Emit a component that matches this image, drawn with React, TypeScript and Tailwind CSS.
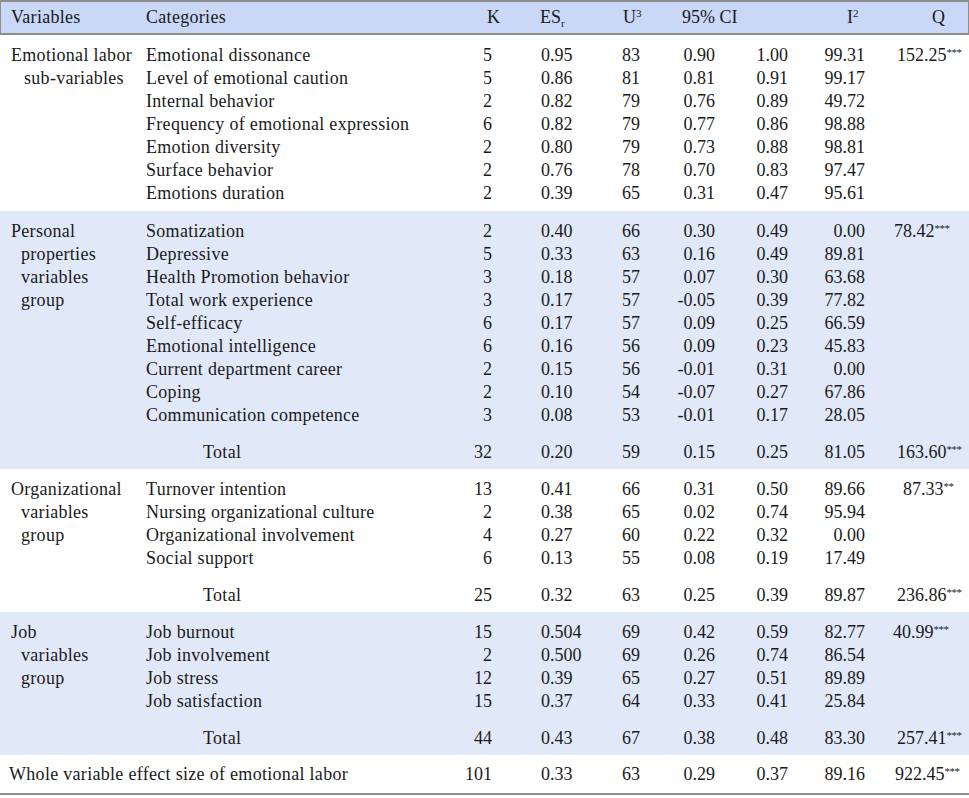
import React from "react";

type Row = {
  cat: string;
  k: string;
  es: string;
  u: string;
  lo: string;
  hi: string;
  i2: string;
  q?: string;
  stars?: string;
  qClass?: string;
};

type Section = {
  label: string[];
  labelClass?: string[];
  bg: string;
  rows: Row[];
  total?: Row;
};

const sections: Section[] = [
  {
    label: ["Emotional labor", "sub-variables"],
    labelClass: ["pl-[11px]", "pl-[24px]"],
    bg: "bg-white",
    rows: [
      { cat: "Emotional dissonance", k: "5", es: "0.95", u: "83", lo: "0.90", hi: "1.00", i2: "99.31", q: "152.25", stars: "***" },
      { cat: "Level of emotional caution", k: "5", es: "0.86", u: "81", lo: "0.81", hi: "0.91", i2: "99.17" },
      { cat: "Internal behavior", k: "2", es: "0.82", u: "79", lo: "0.76", hi: "0.89", i2: "49.72" },
      { cat: "Frequency of emotional expression", k: "6", es: "0.82", u: "79", lo: "0.77", hi: "0.86", i2: "98.88" },
      { cat: "Emotion diversity", k: "2", es: "0.80", u: "79", lo: "0.73", hi: "0.88", i2: "98.81" },
      { cat: "Surface behavior", k: "2", es: "0.76", u: "78", lo: "0.70", hi: "0.83", i2: "97.47" },
      { cat: "Emotions duration", k: "2", es: "0.39", u: "65", lo: "0.31", hi: "0.47", i2: "95.61" },
    ],
  },
  {
    label: ["Personal", "properties", "variables", "group"],
    labelClass: ["pl-[11px]", "pl-[21px]", "pl-[21px]", "pl-[21px]"],
    bg: "bg-[#e1e9f9]",
    rows: [
      { cat: "Somatization", k: "2", es: "0.40", u: "66", lo: "0.30", hi: "0.49", i2: "0.00", q: "78.42", stars: "***", qClass: "pl-[28px]" },
      { cat: "Depressive", k: "5", es: "0.33", u: "63", lo: "0.16", hi: "0.49", i2: "89.81" },
      { cat: "Health Promotion behavior", k: "3", es: "0.18", u: "57", lo: "0.07", hi: "0.30", i2: "63.68" },
      { cat: "Total work experience", k: "3", es: "0.17", u: "57", lo: "-0.05", hi: "0.39", i2: "77.82" },
      { cat: "Self-efficacy", k: "6", es: "0.17", u: "57", lo: "0.09", hi: "0.25", i2: "66.59" },
      { cat: "Emotional intelligence", k: "6", es: "0.16", u: "56", lo: "0.09", hi: "0.23", i2: "45.83" },
      { cat: "Current department career", k: "2", es: "0.15", u: "56", lo: "-0.01", hi: "0.31", i2: "0.00" },
      { cat: "Coping", k: "2", es: "0.10", u: "54", lo: "-0.07", hi: "0.27", i2: "67.86" },
      { cat: "Communication competence", k: "3", es: "0.08", u: "53", lo: "-0.01", hi: "0.17", i2: "28.05" },
    ],
    total: { cat: "Total", k: "32", es: "0.20", u: "59", lo: "0.15", hi: "0.25", i2: "81.05", q: "163.60", stars: "***" },
  },
  {
    label: ["Organizational", "variables", "group"],
    labelClass: ["pl-[11px]", "pl-[21px]", "pl-[21px]"],
    bg: "bg-white",
    rows: [
      { cat: "Turnover intention", k: "13", es: "0.41", u: "66", lo: "0.31", hi: "0.50", i2: "89.66", q: "87.33", stars: "**", qClass: "pl-[37px]" },
      { cat: "Nursing organizational culture", k: "2", es: "0.38", u: "65", lo: "0.02", hi: "0.74", i2: "95.94" },
      { cat: "Organizational involvement", k: "4", es: "0.27", u: "60", lo: "0.22", hi: "0.32", i2: "0.00" },
      { cat: "Social support", k: "6", es: "0.13", u: "55", lo: "0.08", hi: "0.19", i2: "17.49" },
    ],
    total: { cat: "Total", k: "25", es: "0.32", u: "63", lo: "0.25", hi: "0.39", i2: "89.87", q: "236.86", stars: "***" },
  },
  {
    label: ["Job", "variables", "group"],
    labelClass: ["pl-[11px]", "pl-[21px]", "pl-[21px]"],
    bg: "bg-[#e1e9f9]",
    rows: [
      { cat: "Job burnout", k: "15", es: "0.504", u: "69", lo: "0.42", hi: "0.59", i2: "82.77", q: "40.99", stars: "***", qClass: "pl-[27px]" },
      { cat: "Job involvement", k: "2", es: "0.500", u: "69", lo: "0.26", hi: "0.74", i2: "86.54" },
      { cat: "Job stress", k: "12", es: "0.39", u: "65", lo: "0.27", hi: "0.51", i2: "89.89" },
      { cat: "Job satisfaction", k: "15", es: "0.37", u: "64", lo: "0.33", hi: "0.41", i2: "25.84" },
    ],
    total: { cat: "Total", k: "44", es: "0.43", u: "67", lo: "0.38", hi: "0.48", i2: "83.30", q: "257.41", stars: "***" },
  },
];

const grid =
  "grid grid-cols-[314px_40px_110px_50px_55px_75px_76px_103px] leading-[23px] h-[23px]";

function NumCells({ r }: { r: Row }) {
  return (
    <>
      <div className="text-right pr-[8px]">{r.k}</div>
      <div className="pl-[41px]">{r.es}</div>
      <div className="pl-[12px]">{r.u}</div>
      <div className="text-right">{r.lo}</div>
      <div className="text-right pr-[2px]">{r.hi}</div>
      <div className="text-right pr-[1px]">{r.i2}</div>
      <div className={`${r.qClass ?? "pl-[31px]"} whitespace-nowrap`}>
        {r.q ?? ""}
        {r.stars ? (
          <span className="inline-block align-top text-[11px] leading-[12px] pt-[2px] tracking-[-0.5px]">
            {r.stars}
          </span>
        ) : null}
      </div>
    </>
  );
}

function DataRow({ r, total }: { r: Row; total?: boolean }) {
  return (
    <div className={grid}>
      <div className={total ? "pl-[57px] tracking-[0.3px]" : "tracking-[0.3px]"}>{r.cat}</div>
      <NumCells r={r} />
    </div>
  );
}

export default function App() {
  return (
    <div
      className="w-[969px] bg-white text-[#1a1a1a] text-[18px]"
      style={{ fontFamily: '"Liberation Serif", "Times New Roman", serif' }}
    >
      {/* Header */}
      <div className="border-t-2 border-b-2 border-x border-[#8c8c8c] bg-[#c9d8f7] h-[35px]">
        <div className="grid grid-cols-[145px_314px_40px_110px_50px_130px_76px_103px] h-[31px] items-center leading-[23px]">
          <div className="pl-[10px] tracking-[0.3px]">Variables</div>
          <div className="tracking-[0.3px]">Categories</div>
          <div className="text-right">K</div>
          <div className="pl-[40px] whitespace-nowrap">
            ES<span className="inline-block align-bottom text-[11px] leading-[11px]">r</span>
          </div>
          <div className="pl-[13px] whitespace-nowrap">
            U<span className="inline-block align-top text-[11px] leading-[11px] pt-[2px]">3</span>
          </div>
          <div className="pl-[22px]">95% CI</div>
          <div className="pl-[57px] whitespace-nowrap">
            I<span className="inline-block align-top text-[11px] leading-[11px] pt-[2px]">2</span>
          </div>
          <div className="pl-[66px]">Q</div>
        </div>
      </div>

      {sections.map((s, i) => (
        <div key={i} className={`${s.bg} flex pt-[9px] ${s.total ? "pb-[5px]" : "pb-[6px]"}`}>
          <div className="w-[146px] shrink-0 leading-[23px] tracking-[0.3px]">
            {s.label.map((l, j) => (
              <div key={j} className={s.labelClass ? s.labelClass[j] : "pl-[11px]"}>
                {l}
              </div>
            ))}
          </div>
          <div className="flex flex-col">
            {s.rows.map((r, j) => (
              <DataRow key={j} r={r} />
            ))}
            {s.total ? (
              <div className="mt-[14px]">
                <DataRow r={s.total} total />
              </div>
            ) : null}
          </div>
        </div>
      ))}

      {/* Whole row */}
      <div className="flex pt-[8px] pb-[7px] border-b-2 border-[#8c8c8c]">
        <div className="grid grid-cols-[460px_40px_110px_50px_55px_75px_76px_103px] leading-[23px] h-[23px]">
          <div className="pl-[9px] tracking-[0.3px]">Whole variable effect size of emotional labor</div>
          <NumCells
            r={{ cat: "", k: "101", es: "0.33", u: "63", lo: "0.29", hi: "0.37", i2: "89.16", q: "922.45", stars: "***", qClass: "pl-[29px]" }}
          />
        </div>
      </div>
    </div>
  );
}
